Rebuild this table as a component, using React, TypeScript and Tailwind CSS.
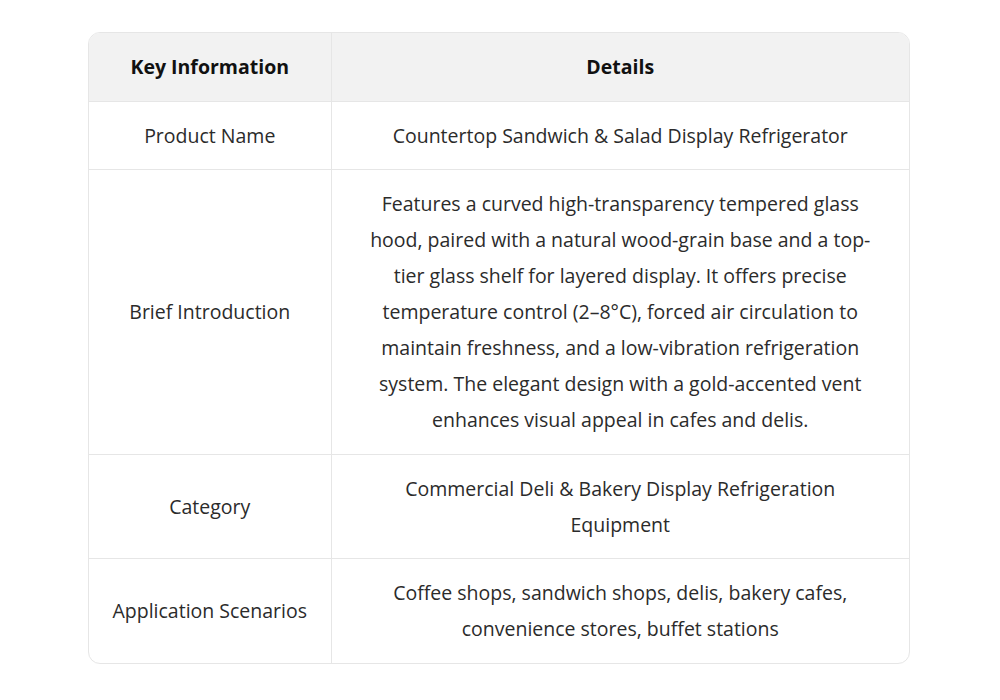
import React from 'react';

const rows: { key: string; value: string }[] = [
  { key: 'Product Name', value: 'Countertop Sandwich & Salad Display Refrigerator' },
  {
    key: 'Brief Introduction',
    value:
      'Features a curved high-transparency tempered glass hood, paired with a natural wood-grain base and a top-tier glass shelf for layered display. It offers precise temperature control (2–8°C), forced air circulation to maintain freshness, and a low-vibration refrigeration system. The elegant design with a gold-accented vent enhances visual appeal in cafes and delis.',
  },
  { key: 'Category', value: 'Commercial Deli & Bakery Display Refrigeration Equipment' },
  {
    key: 'Application Scenarios',
    value: 'Coffee shops, sandwich shops, delis, bakery cafes, convenience stores, buffet stations',
  },
];

export default function App() {
  return (
    <div
      className="w-[1000px] h-[700px] bg-white pt-[32px] pl-[88px]"
      style={{ fontFamily: '"Open Sans", "Noto Sans", sans-serif' }}
    >
      <div className="w-[822px] rounded-[12px] border border-[#e6e6e6] overflow-hidden">
        <table className="w-full border-collapse text-[19.5px] leading-[36px] text-[#2b2b2b]">
          <thead>
            <tr className="bg-[#f2f2f2]">
              <th className="w-[242px] h-[68px] border-r border-b border-[#e6e6e6] font-bold text-[#111]">
                Key Information
              </th>
              <th className="h-[68px] border-b border-[#e6e6e6] font-bold text-[#111]">Details</th>
            </tr>
          </thead>
          <tbody>
            {rows.map((r, i) => (
              <tr key={r.key}>
                <td
                  className={`border-r border-[#e6e6e6] text-center px-4 pt-4 pb-[15.5px] ${
                    i < rows.length - 1 ? 'border-b' : ''
                  }`}
                >
                  {r.key}
                </td>
                <td
                  className={`border-[#e6e6e6] text-center px-[32px] pt-4 pb-[15.5px] ${
                    i < rows.length - 1 ? 'border-b' : ''
                  }`}
                >
                  {r.value}
                </td>
              </tr>
            ))}
          </tbody>
        </table>
      </div>
    </div>
  );
}
